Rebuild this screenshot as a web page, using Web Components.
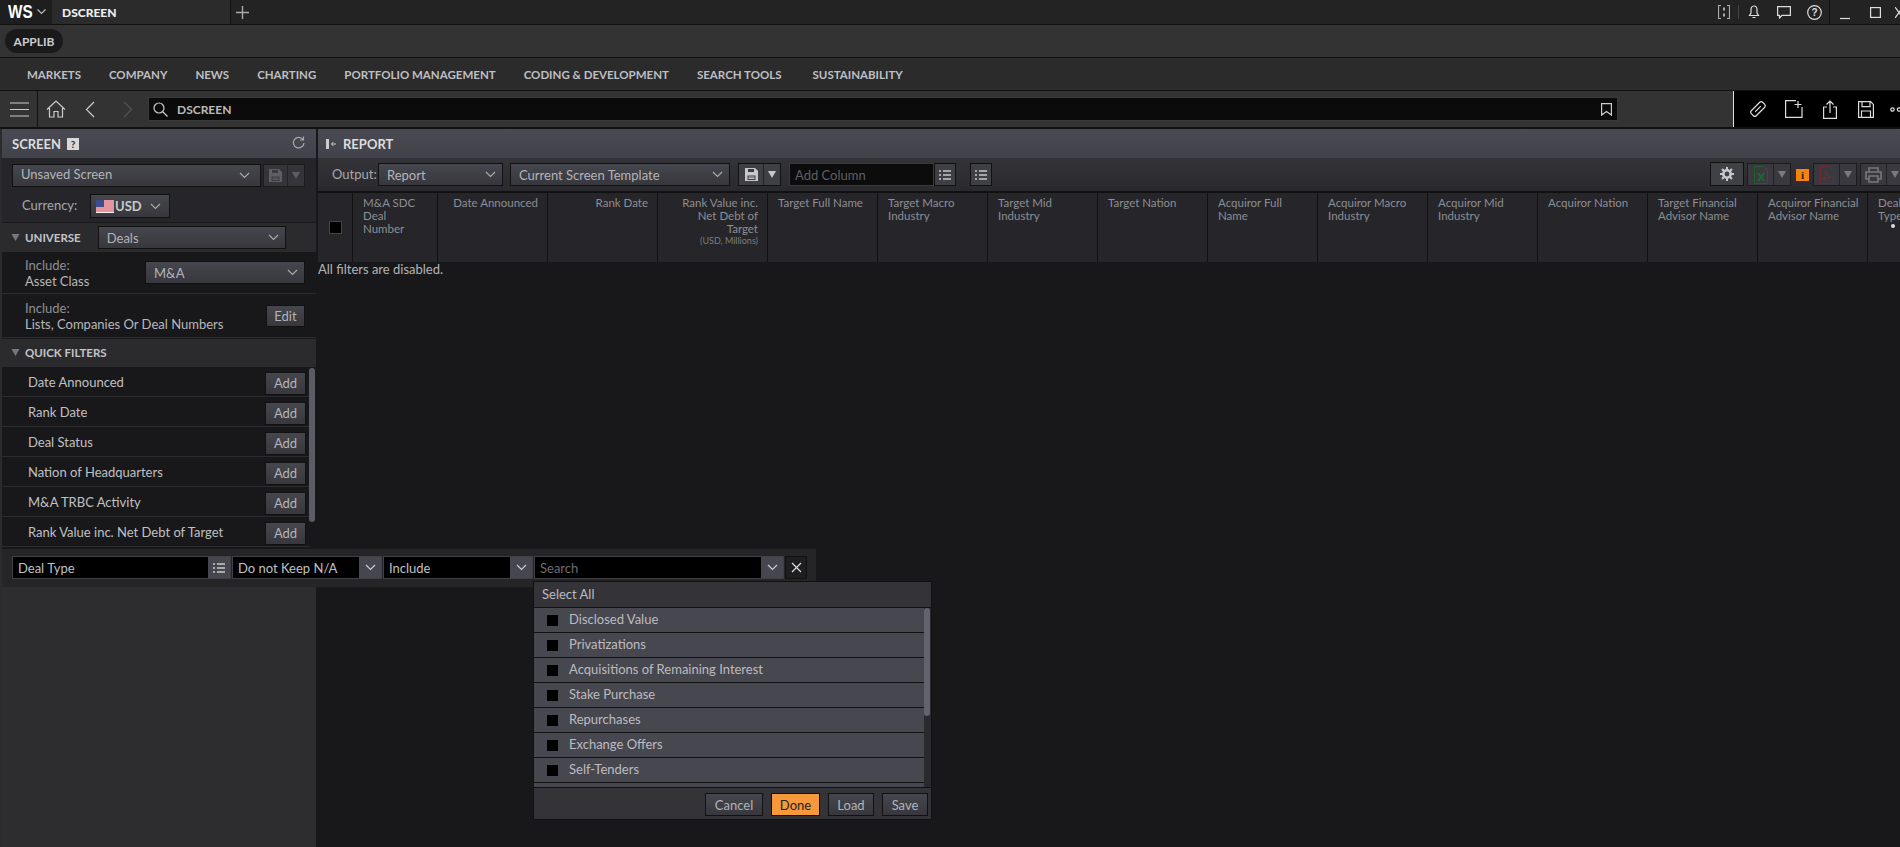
<!DOCTYPE html>
<html>
<head>
<meta charset="utf-8">
<title>DSCREEN</title>
<style>
    html, body { margin: 0; height: 847px; overflow: hidden; background: #18181a; }
    body { font-family: Lato, "Liberation Sans", sans-serif; font-size: 13px; color: #bbb; }
</style>
</head>
<body>
<ws-titlebar></ws-titlebar>
<ws-applib></ws-applib>
<ws-menubar></ws-menubar>
<ws-addressbar></ws-addressbar>
<ws-workspace>
    <screen-panel slot="left"></screen-panel>
    <report-panel slot="right"></report-panel>
    <filter-bar slot="over"></filter-bar>
    <deal-menu slot="over"></deal-menu>
</ws-workspace>

<script>
const line = `fill="none" stroke="currentColor" stroke-width="1.2"`;
const icons = {
    chevron: `<svg width="11" height="7" viewBox="0 0 11 7"><path d="M1 1l4.5 4.5L10 1" ${line}/></svg>`,
    caret: `<svg width="8" height="7" viewBox="0 0 8 7"><path d="M0 0h8L4 7z" fill="currentColor"/></svg>`,
    list: `<svg width="12" height="10" viewBox="0 0 12 10"><path d="M0 1h2M4 1h8M0 5h2M4 5h8M0 9h2M4 9h8" fill="none" stroke="currentColor" stroke-width="1.6"/></svg>`,
    floppy: `<svg width="13" height="13" viewBox="0 0 13 13"><path d="M0 0h10l3 3v10H0z" fill="currentColor"/><path d="M3 1h6v3H3zM2.5 7.500h8v4.500h-8z" fill="#3a3a40"/><path d="M3.500 9h6M3.500 10.500h6" stroke="currentColor"/></svg>`,
    close: `<svg width="11" height="11" viewBox="0 0 11 11"><path d="M1 1l9 9M10 1l-9 9" ${line}/></svg>`,
    gear: `<svg width="14" height="14" viewBox="0 0 14 14"><circle cx="7" cy="7" r="3.700" fill="none" stroke="currentColor" stroke-width="2.600"/><path d="M7 0v3M7 11v3M0 7h3M11 7h3M2 2l2 2M10 10l2 2M12 2l-2 2M4 10l-2 2" stroke="currentColor" stroke-width="2"/></svg>`,
    excel: `<svg width="14" height="18" viewBox="0 0 14 18"><path d="M.5.500h9l4 4v13H.500z" fill="none" stroke="#1e5f2c"/><path d="M4 7l6 8M10 7l-6 8" stroke="#1e6a30" stroke-width="2"/></svg>`,
    pdf: `<svg width="14" height="18" viewBox="0 0 14 18"><path d="M.5.500h9l4 4v13H.500z" fill="none" stroke="#6e2a30"/><path d="M6 5c0 4-1 6-3 9 3-2 5-3 8-3-3-1-4-3-5-6z" fill="none" stroke="#7a2c32"/></svg>`,
    print: `<svg width="17" height="16" viewBox="0 0 17 16"><path d="M4 5V1h9v4M4 12H1V5h15v7h-3M4 9h9v6H4z" fill="none" stroke="#77777c" stroke-width="1.600"/></svg>`,
    flag: `<svg width="18" height="13" viewBox="0 0 18 13"><rect width="18" height="13" fill="#f3f3f3"/><path d="M0 1h18M0 3h18M0 5h18M0 7h18M0 9h18M0 11h18" stroke="#d8344a" stroke-width="1"/><rect width="8" height="7" fill="#3b4f8c"/></svg>`,
};

// shared bits of style for the little grey controls
const controlCss = `
    .ctl {
        box-sizing: border-box;
        display: flex;
        align-items: center;
        border: 1px solid #111;
        background: linear-gradient(#46464e, #37373d);
        color: #b4b4b8;
    }
`;

window.customElements.define("ws-titlebar", class extends HTMLElement {
    constructor() {
        super();
        this.attachShadow({ mode: "open" });
        this.shadowRoot.innerHTML = `
        <style>
            :host { display: flex; height: 24px; background: #232324; border-bottom: 1px solid #111; color: #ddd; overflow: hidden; }
            .logo { width: 52px; box-sizing: border-box; padding-left: 8px; display: flex; align-items: center; background: #1e1e1f; height: 24px; }
            .logo b { display: block; width: 25px; font: bold 18px "Liberation Sans", sans-serif; color: #fff; transform: scaleX(.85); transform-origin: left; }
            .tab { width: 179px; box-sizing: border-box; padding-left: 10px; display: flex; align-items: center; background: #2b2b2c; font-weight: 900; font-size: 12px; color: #eee; border-right: 1px solid #111; height: 25px; }
            .plus { margin-left: 5px; width: 14px; display: flex; align-items: center; }
            .grow { flex: 1; }
            .tools { display: flex; align-items: center; margin-right: -7px; }
            .tools span { display: flex; justify-content: center; width: 30px; }
            .sep { width: 1px; height: 14px; background: #444; }
            .sep2 { width: 1px; height: 24px; background: #111; }
            svg { display: block; }
        </style>
        <div class="logo"><b>WS</b><svg width="9" height="6" viewBox="0 0 9 6" style="color:#bbb;margin-left:4px"><path d="M.5.5l4 4 4-4" ${line}/></svg></div>
        <div class="tab">DSCREEN</div>
        <div class="plus"><svg width="13" height="13" viewBox="0 0 13 13" style="color:#aaa"><path d="M6.500 0v13M0 6.500h13" fill="none" stroke="currentColor" stroke-width="1.400"/></svg></div>
        <div class="grow"></div>
        <div class="tools">
            <span style="width:14px;margin-right:7px"><svg width="12" height="14" viewBox="0 0 12 14" style="color:#aaa"><path d="M3 .5H.5v13H3M9 .5h2.500v13H9" ${line}/><path d="M6 2.500v3M6 8.500v3" stroke="currentColor" stroke-width="2"/></svg></span>
            <div class="sep"></div>
            <span><svg width="12" height="14" viewBox="0 0 12 14"><path d="M6 1C3.500 1 3 3 3 5v3L1.500 10.500h9L9 8V5C9 3 8.500 1 6 1zM4.500 12.500h3" ${line}/></svg></span>
            <span><svg width="14" height="13" viewBox="0 0 14 13"><path d="M.6.6h12.800v8.800H5L2.500 12V9.400H.6z" ${line}/></svg></span>
            <span><svg width="15" height="15" viewBox="0 0 15 15"><circle cx="7.500" cy="7.500" r="6.800" ${line}/><text x="7.500" y="11" text-anchor="middle" font-size="10" font-weight="bold" fill="currentColor" font-family="Liberation Sans">?</text></svg></span>
            <div class="sep2"></div>
            <span><svg width="11" height="12" viewBox="0 0 11 12" style="margin-top:3px"><path d="M0 10.500h10" ${line}/></svg></span>
            <span><svg width="11" height="11" viewBox="0 0 11 11"><rect x=".6" y=".6" width="9.800" height="9.800" ${line}/></svg></span>
            <span style="width:12px;justify-content:flex-start;margin-left:5px"><svg width="8" height="11" viewBox="0 0 8 11"><path d="M0 0l8 11M8 0L0 11" ${line}/></svg></span>
        </div>
        `;
    }
});

window.customElements.define("ws-applib", class extends HTMLElement {
    constructor() {
        super();
        this.attachShadow({ mode: "open" });
        this.shadowRoot.innerHTML = `
        <style>
            :host { display: flex; align-items: center; height: 32px; box-sizing: content-box; padding-left: 5px; background: #333334; border-bottom: 1px solid #111; }
            .pill { width: 58px; height: 24px; border-radius: 12px; background: #1a1a1b; color: #ccc; font-size: 12px; font-weight: 700; display: flex; align-items: center; justify-content: center; }
        </style>
        <div class="pill">APPLIB</div>
        `;
    }
});

window.customElements.define("ws-menubar", class extends HTMLElement {
    #items = ["MARKETS", "COMPANY", "NEWS", "CHARTING", "PORTFOLIO MANAGEMENT", "CODING & DEVELOPMENT", "SEARCH TOOLS", "SUSTAINABILITY"];

    constructor() {
        super();
        this.attachShadow({ mode: "open" });
        this.shadowRoot.innerHTML = `
        <style>
            :host { display: flex; align-items: center; gap: 28px; height: 32px; padding-left: 27px; background: #2b2b2c; border-bottom: 1px solid #111; color: #bfbfc2; font-size: 11.500px; font-weight: 700; }
            span:last-child { margin-left: 3px; }
        </style>
        ${this.#items.map(i => `<span>${i.replace("&", "&amp;")}</span>`).join("")}
        `;
    }
});

window.customElements.define("ws-addressbar", class extends HTMLElement {
    constructor() {
        super();
        this.attachShadow({ mode: "open" });
        this.shadowRoot.innerHTML = `
        <style>
            :host { display: flex; height: 36px; padding-left: 2px; background: #333334; border-bottom: 2px solid #111; color: #ccc; }
            svg { display: block; }
            .burger { width: 35px; border-right: 1px solid #111; display: flex; align-items: center; justify-content: center; }
            .nav { display: flex; align-items: center; width: 110px; }
            .input { box-sizing: border-box; width: 1470px; height: 24px; margin-top: 6px; background: #0b0b0b; border: 1px solid #3a3a3a; display: flex; align-items: center; color: #bbb; font-size: 12px; font-weight: 700; }
            .input span { flex: 1; margin-left: 9px; }
            .gap { flex: 1; }
            .actions { width: 167px; box-sizing: border-box; padding-left: 6px; background: #000; border-left: 1px solid #ddd; display: flex; align-items: center; color: #ddd; overflow: hidden; }
            .actions div { width: 36px; display: flex; justify-content: center; flex: none; }
        </style>
        <div class="burger"><svg width="19" height="15" viewBox="0 0 19 15"><path d="M0 1h19M0 7.500h19M0 14h19" ${line} stroke-width="1.400"/></svg></div>
        <div class="nav">
            <svg width="20" height="18" viewBox="0 0 20 18" style="margin-left:8px"><path d="M1 9.500L10 1l9 8.500M3.500 8v9h4.500v-5.500h4V17h4.500V8" ${line}/></svg>
            <svg width="10" height="17" viewBox="0 0 10 17" style="margin-left:19px"><path d="M9 1L1.500 8.500 9 16" ${line} stroke-width="1.400"/></svg>
            <svg width="10" height="17" viewBox="0 0 10 17" style="margin-left:28px;color:#555"><path d="M1 1l7.500 7.500L1 16" ${line} stroke-width="1.400"/></svg>
        </div>
        <div class="input">
            <svg width="15" height="15" viewBox="0 0 15 15" style="margin-left:4px;color:#ccc"><circle cx="6" cy="6" r="5" ${line}/><path d="M9.500 9.500l5 5" ${line}/></svg>
            <span>DSCREEN</span>
            <svg width="11" height="13" viewBox="0 0 11 13" style="margin-right:5px;color:#ccc"><path d="M.6.6h9.800v11.500L5.500 8.500.6 12.100z" ${line}/></svg>
        </div>
        <div class="gap"></div>
        <div class="actions">
            <div><svg width="18" height="18" viewBox="0 0 18 18"><g transform="rotate(45 9 9)"><rect x="5.500" y="1" width="7" height="16" rx="2" ${line}/><path d="M9 5v8" ${line}/></g></svg></div>
            <div><svg width="18" height="18" viewBox="0 0 18 18"><path d="M11 .6H.6v16.800h16.400V7M13 1v7M9.500 4.500h7" ${line}/></svg></div>
            <div><svg width="14" height="19" viewBox="0 0 14 19"><path d="M4 7H.6v11.400h12.800V7H10M7 13V1M3.500 4.500L7 1l3.500 3.500" ${line}/></svg></div>
            <div><svg width="16" height="17" viewBox="0 0 16 17"><path d="M.6.6h12l2.800 2.800v13H.6zM4 .6v5h8v-5M3.500 16.400V10h9v6.400" ${line}/></svg></div>
            <div style="justify-content:flex-start;margin-left:6px"><svg width="14" height="5" viewBox="0 0 14 5"><circle cx="2.500" cy="2.500" r="1.700" ${line}/><circle cx="9" cy="2.500" r="1.700" ${line}/></svg></div>
        </div>
        `;
    }
});

window.customElements.define("ws-workspace", class extends HTMLElement {
    constructor() {
        super();
        this.attachShadow({ mode: "open" });
        this.shadowRoot.innerHTML = `
        <style>
            :host { display: block; position: relative; height: 718px; padding-left: 2px; background: #18181a; box-shadow: inset 2px 0 0 #2b2b2c; }
            .cols { display: grid; grid-template-columns: 314px 1fr; column-gap: 2px; height: 100%; }
            ::slotted(*) { min-width: 0; }
        </style>
        <div class="cols">
            <slot name="left"></slot>
            <slot name="right"></slot>
        </div>
        <slot name="over"></slot>
        `;
    }
});

// grey dropdown look-alike, the label comes in through the slot
window.customElements.define("ws-select", class extends HTMLElement {
    constructor() {
        super();
        this.attachShadow({ mode: "open" });
        this.shadowRoot.innerHTML = `
        <style>
            ${controlCss}
            :host { display: block; height: 23px; font-size: 13px; }
            .ctl { height: 100%; padding: 0 var(--pad-right, 6px) 0 var(--pad-left, 8px); }
            .label { flex: 1; display: flex; align-items: center; white-space: nowrap; padding-bottom: var(--lift, 0); }
            svg { display: block; color: #aaa; }
        </style>
        <div class="ctl"><div class="label"><slot></slot></div>${icons.chevron}</div>
        `;
    }
});

window.customElements.define("ws-button", class extends HTMLElement {
    constructor() {
        super();
        this.attachShadow({ mode: "open" });
        this.shadowRoot.innerHTML = `
        <style>
            ${controlCss}
            :host { display: block; height: 23px; font-size: 13px; }
            :host([primary]) .ctl { background: #f7993a; color: #222; }
            .ctl { height: 100%; justify-content: center; padding-bottom: var(--lift, 0); }
        </style>
        <div class="ctl"><slot></slot></div>
        `;
    }
});

// save / excel / pdf style split button with a small caret part
window.customElements.define("split-button", class extends HTMLElement {
    constructor() {
        super();
        this.attachShadow({ mode: "open" });
        this.shadowRoot.innerHTML = `
        <style>
            :host { display: flex; box-sizing: border-box; height: 23px; border: 1px solid #1c1c1e; background: #39393f; color: #7a7a7f; }
            :host([bright]) { color: #c8c8cc; background: #3f3f46; border-color: #111; }
            :host([dim]) { color: #5e5e64; background: #34343a; }
            .main { flex: 1; display: flex; align-items: center; justify-content: center; border-right: 1px solid #232326; }
            .caret { width: 16px; display: flex; align-items: center; justify-content: center; }
            svg { display: block; }
        </style>
        <div class="main"><slot></slot></div>
        <div class="caret">${icons.caret}</div>
        `;
    }
});

window.customElements.define("quick-filter", class extends HTMLElement {
    constructor() {
        super();
        this.attachShadow({ mode: "open" });
        this.shadowRoot.innerHTML = `
        <style>
            :host { display: flex; align-items: flex-start; box-sizing: border-box; height: 30px; padding: 0 3px 0 26px; border-bottom: 1px solid #2c2c2f; background: #18181a; color: #c0c0c4; }
            .name { flex: 1; margin-top: 7px; line-height: 16px; }
            ws-button { width: 41px; height: 23px; margin-top: 5px; color: #b4b4b8; --lift: 2px; }
        </style>
        <div class="name"><slot></slot></div>
        <ws-button>Add</ws-button>
        `;
    }
});

window.customElements.define("screen-panel", class extends HTMLElement {
    #filters = ["Date Announced", "Rank Date", "Deal Status", "Nation of Headquarters", "M&A TRBC Activity", "Rank Value inc. Net Debt of Target"];

    constructor() {
        super();
        this.attachShadow({ mode: "open" });
        this.shadowRoot.innerHTML = `
        <style>
            :host { display: flex; flex-direction: column; height: 718px; background: #2d2d2f; font-size: 13px; color: #a8a8ac; }
            svg { display: block; }
            .head { height: 29px; flex: none; padding: 0 10px; display: flex; align-items: center; background: linear-gradient(#4a4a54, #42424a); color: #ddd; font-weight: 700; font-size: 13px; }
            .head .q { margin-left: 6px; width: 12px; height: 12px; background: #d8d8d8; color: #333; font-size: 10px; font-weight: 900; display: flex; align-items: center; justify-content: center; }
            .head .grow { flex: 1; }
            .head svg { color: #aaa; margin-right: 1px; margin-top: -2px; }
            .saved { height: 36px; flex: none; box-sizing: border-box; padding: 6px 9px 0 10px; display: flex; gap: 2px; background: #26262a; }
            .saved ws-select { width: 249px; --pad-right: 10px; --lift: 3px; }
            .saved split-button { width: 42px; }
            .currency { height: 28px; flex: none; box-sizing: border-box; display: flex; align-items: flex-start; padding-left: 20px; background: #26262a; }
            .currency span { width: 68px; margin-top: 3px; }
            .currency ws-select { width: 80px; height: 24px; --pad-left: 5px; --pad-right: 8px; }
            .currency b { font-weight: 700; margin-left: 1px; color: #c8c8cc; }
            .section { flex: none; box-sizing: border-box; display: flex; align-items: center; padding-left: 9px; background: #2b2b2e; color: #c4c4c8; font-weight: 700; font-size: 11.500px; border-top: 1px solid #1a1a1c; }
            .section svg.c { color: #77777c; margin-right: 5px; }
            .universe { height: 30px; }
            .universe ws-select { width: 188px; margin-left: 17px; font-weight: 400; color: #bbb; font-size: 13px; }
            .include { flex: none; box-sizing: border-box; display: flex; align-items: center; padding: 0 11px 0 23px; background: #18181a; border-bottom: 1px solid #2c2c2f; line-height: 16px; }
            .include .txt { flex: 1; }
            .include i { font-style: normal; color: #8f8f94; display: block; }
            .quick { height: 29px; padding-bottom: 2px; }
            .list { flex: none; display: flex; height: 182px; background: #18181a; }
            .rows { flex: 1; }
            .track { width: 7px; }
            .thumb { width: 6px; height: 154px; margin-top: 1px; border-radius: 3px; background: #5c5c66; }
            .rest { flex: 1; }
        </style>
        <div class="head">SCREEN<span class="q">?</span><span class="grow"></span>
            <svg width="13" height="13" viewBox="0 0 13 13"><path d="M11 3.500A5.300 5.300 0 1 0 12 7M11.500 .5v3.500H8" ${line}/></svg>
        </div>
        <div class="saved">
            <ws-select>Unsaved Screen</ws-select>
            <split-button dim>${icons.floppy}</split-button>
        </div>
        <div class="currency">
            <span>Currency:</span>
            <ws-select>${icons.flag}<b>USD</b></ws-select>
        </div>
        <div class="section universe">
            <svg class="c" width="9" height="7" viewBox="0 0 8 7"><path d="M0 0h8L4 7z" fill="currentColor"/></svg>UNIVERSE
            <ws-select>Deals</ws-select>
        </div>
        <div class="include" style="height:42px">
            <div class="txt"><i>Include:</i><span style="color:#b8b8bc">Asset Class</span></div>
            <ws-select style="width:160px">M&amp;A</ws-select>
        </div>
        <div class="include" style="height:44px">
            <div class="txt"><i>Include:</i><span style="color:#b8b8bc">Lists, Companies Or Deal Numbers</span></div>
            <ws-button style="width:39px;height:22px">Edit</ws-button>
        </div>
        <div class="section quick">
            <svg class="c" width="9" height="7" viewBox="0 0 8 7"><path d="M0 0h8L4 7z" fill="currentColor"/></svg>QUICK FILTERS
        </div>
        <div class="list">
            <div class="rows">${this.#filters.map(f => `<quick-filter>${f.replace("&", "&amp;")}</quick-filter>`).join("")}</div>
            <div class="track"><div class="thumb"></div></div>
        </div>
        <div class="rest"></div>
        `;
    }
});

window.customElements.define("head-cell", class extends HTMLElement {
    constructor() {
        super();
        this.attachShadow({ mode: "open" });
        this.shadowRoot.innerHTML = `
        <style>
            :host { display: block; flex: none; box-sizing: border-box; width: 110px; height: 69px; padding: 3px 9px 0 10px; border-right: 1px solid #111; font-size: 11.500px; line-height: 13px; color: #8e8e93; white-space: nowrap; }
            :host([right]) { text-align: right; }
        </style>
        <slot></slot>
        `;
    }
});

window.customElements.define("report-panel", class extends HTMLElement {
    constructor() {
        super();
        this.attachShadow({ mode: "open" });
        this.shadowRoot.innerHTML = `
        <style>
            :host { display: flex; flex-direction: column; height: 718px; overflow: hidden; font-size: 13px; }
            svg { display: block; }
            .head { height: 29px; flex: none; padding-left: 8px; display: flex; align-items: center; background: linear-gradient(#4a4a54, #42424a); color: #ddd; font-weight: 700; }
            .head svg { margin-right: 6px; color: #ccc; }
            .bar { height: 35px; flex: none; box-sizing: border-box; padding-top: 5px; display: flex; align-items: flex-start; background: linear-gradient(#333338, #2a2a2e); border-bottom: 2px solid #111; color: #a8a8ac; }
            .bar .lbl { width: 46px; margin: 3px 0 0 14px; }
            .bar ws-select { height: 23px; }
            .add { box-sizing: border-box; width: 145px; height: 23px; margin-left: 8px; background: #0c0c0c; border: 1px solid #3a3a3e; color: #5f5f64; padding: 3px 5px; }
            .listbtn { box-sizing: border-box; width: 22px; height: 23px; display: flex; align-items: center; justify-content: center; background: #3f3f46; color: #c8c8cc; border: 1px solid #111; }
            .gearbtn { width: 34px; height: 24px; margin: -1px 3px 0 0; background: #404047; }
            .grow { flex: 1; }
            .info { width: 13px; height: 12px; background: #f7820e; color: #222; font: bold 11px "Liberation Serif", serif; text-align: center; line-height: 12px; margin: 6px 4px 0 5px; }
            .table { display: flex; height: 69px; flex: none; background: #25252a; }
            .check { flex: none; width: 35px; height: 69px; box-sizing: border-box; border-right: 1px solid #111; padding: 28px 0 0 11px; }
            .check div { width: 11px; height: 11px; background: #000; border: 1px solid #444; }
            small { font-size: 9px; display: block; line-height: 11px; color: #7e7e83; }
            .dot { display: block; width: 4px; height: 4px; border-radius: 50%; background: #ddd; margin: 2px 0 0 13px; }
            .note { color: #b4b4b8; line-height: 16px; margin-top: -1px; }
        </style>
        <div class="head">
            <svg width="11" height="10" viewBox="0 0 11 10"><rect width="3" height="10" fill="currentColor"/><path d="M10 5H5.500M7.500 3L5.500 5l2 2" fill="none" stroke="currentColor"/></svg>
            REPORT
        </div>
        <div class="bar">
            <span class="lbl">Output:</span>
            <ws-select style="width:125px">Report</ws-select>
            <ws-select style="width:220px;margin-left:7px">Current Screen Template</ws-select>
            <split-button bright style="width:43px;margin-left:8px">${icons.floppy}</split-button>
            <div class="add">Add Column</div>
            <div class="listbtn">${icons.list}</div>
            <div class="listbtn" style="margin-left:14px">${icons.list}</div>
            <div class="grow"></div>
            <div class="listbtn gearbtn">${icons.gear}</div>
            <split-button style="width:44px">${icons.excel}</split-button>
            <div class="info">i</div>
            <split-button style="width:44px;margin-right:3px">${icons.pdf}</split-button>
            <split-button style="width:44px;margin-right:-4px">${icons.print}</split-button>
        </div>
        <div class="table">
            <div class="check"><div></div></div>
            <head-cell style="width:85px">M&amp;A SDC<br>Deal<br>Number</head-cell>
            <head-cell right>Date Announced</head-cell>
            <head-cell right>Rank Date</head-cell>
            <head-cell right>Rank Value inc.<br>Net Debt of<br>Target<small>(USD, Millions)</small></head-cell>
            <head-cell>Target Full Name</head-cell>
            <head-cell>Target Macro<br>Industry</head-cell>
            <head-cell>Target Mid<br>Industry</head-cell>
            <head-cell>Target Nation</head-cell>
            <head-cell>Acquiror Full<br>Name</head-cell>
            <head-cell>Acquiror Macro<br>Industry</head-cell>
            <head-cell>Acquiror Mid<br>Industry</head-cell>
            <head-cell>Acquiror Nation</head-cell>
            <head-cell>Target Financial<br>Advisor Name</head-cell>
            <head-cell>Acquiror Financial<br>Advisor Name</head-cell>
            <head-cell>Deal<br>Type<span class="dot"></span></head-cell>
        </div>
        <div class="note">All filters are disabled.</div>
        `;
    }
});

// floating row that adds a filter, lies across both panels
window.customElements.define("filter-bar", class extends HTMLElement {
    constructor() {
        super();
        this.attachShadow({ mode: "open" });
        this.shadowRoot.innerHTML = `
        <style>
            :host { position: absolute; left: 2px; top: 420px; width: 814px; height: 38px; box-sizing: border-box; padding: 7px 0 0 10px; display: flex; gap: 1px; background: #252527; font-size: 13px; color: #b4b4b8; }
            svg { display: block; }
            .field { box-sizing: border-box; height: 23px; background: #000; border: 1px solid #3f3f44; display: flex; align-items: center; color: #c0c0c4; }
            .field span { flex: 1; padding-left: 5px; white-space: nowrap; }
            .field div { width: 22px; height: 21px; flex: none; background: #46464e; color: #ccc; display: flex; align-items: center; justify-content: center; }
            .x { box-sizing: border-box; width: 22px; height: 23px; border: 1px solid #111; background: #1e1e20; color: #ddd; display: flex; align-items: center; justify-content: center; }
        </style>
        <div class="field" style="width:219px"><span>Deal Type</span><div>${icons.list}</div></div>
        <div class="field" style="width:150px"><span>Do not Keep N/A</span><div>${icons.chevron}</div></div>
        <div class="field" style="width:150px"><span>Include</span><div>${icons.chevron}</div></div>
        <div class="field" style="width:250px"><span style="color:#6c6c72">Search</span><div>${icons.chevron}</div></div>
        <div class="x">${icons.close}</div>
        `;
    }
});

window.customElements.define("deal-option", class extends HTMLElement {
    constructor() {
        super();
        this.attachShadow({ mode: "open" });
        this.shadowRoot.innerHTML = `
        <style>
            :host { display: flex; align-items: center; box-sizing: border-box; height: 25px; padding: 0 0 2px 13px; background: #47474f; border-bottom: 1px solid #111; color: #bcbcc0; font-size: 13px; }
            .box { width: 11px; height: 11px; background: #000; margin: 2px 11px 0 0; }
        </style>
        <div class="box"></div><slot></slot>
        `;
    }
});

window.customElements.define("deal-menu", class extends HTMLElement {
    #options = ["Disclosed Value", "Privatizations", "Acquisitions of Remaining Interest", "Stake Purchase", "Repurchases", "Exchange Offers", "Self-Tenders"];

    constructor() {
        super();
        this.attachShadow({ mode: "open" });
        this.shadowRoot.innerHTML = `
        <style>
            :host { position: absolute; left: 533px; top: 452px; width: 399px; height: 239px; box-sizing: border-box; display: flex; flex-direction: column; background: #333338; border: 1px solid #111; font-size: 13px; color: #bcbcc0; }
            .all { height: 26px; flex: none; box-sizing: border-box; padding: 0 0 2px 8px; display: flex; align-items: center; border-bottom: 1px solid #111; }
            .scroll { height: 179px; flex: none; display: flex; border-bottom: 1px solid #111; background: #47474f; overflow: hidden; }
            .opts { flex: 1; }
            .track { width: 7px; background: #2a2a2e; }
            .thumb { width: 6px; height: 108px; border-radius: 3px; background: #63636d; }
            .foot { flex: 1; display: flex; justify-content: flex-end; gap: 8px; padding: 5px 3px 0 0; }
            .foot ws-button { color: #b4b4b8; }
        </style>
        <div class="all">Select All</div>
        <div class="scroll">
            <div class="opts">${this.#options.map(o => `<deal-option>${o}</deal-option>`).join("")}</div>
            <div class="track"><div class="thumb"></div></div>
        </div>
        <div class="foot">
            <ws-button style="width:58px">Cancel</ws-button>
            <ws-button primary style="width:49px">Done</ws-button>
            <ws-button style="width:46px">Load</ws-button>
            <ws-button style="width:46px">Save</ws-button>
        </div>
        `;
    }
});
</script>
</body>
</html>
